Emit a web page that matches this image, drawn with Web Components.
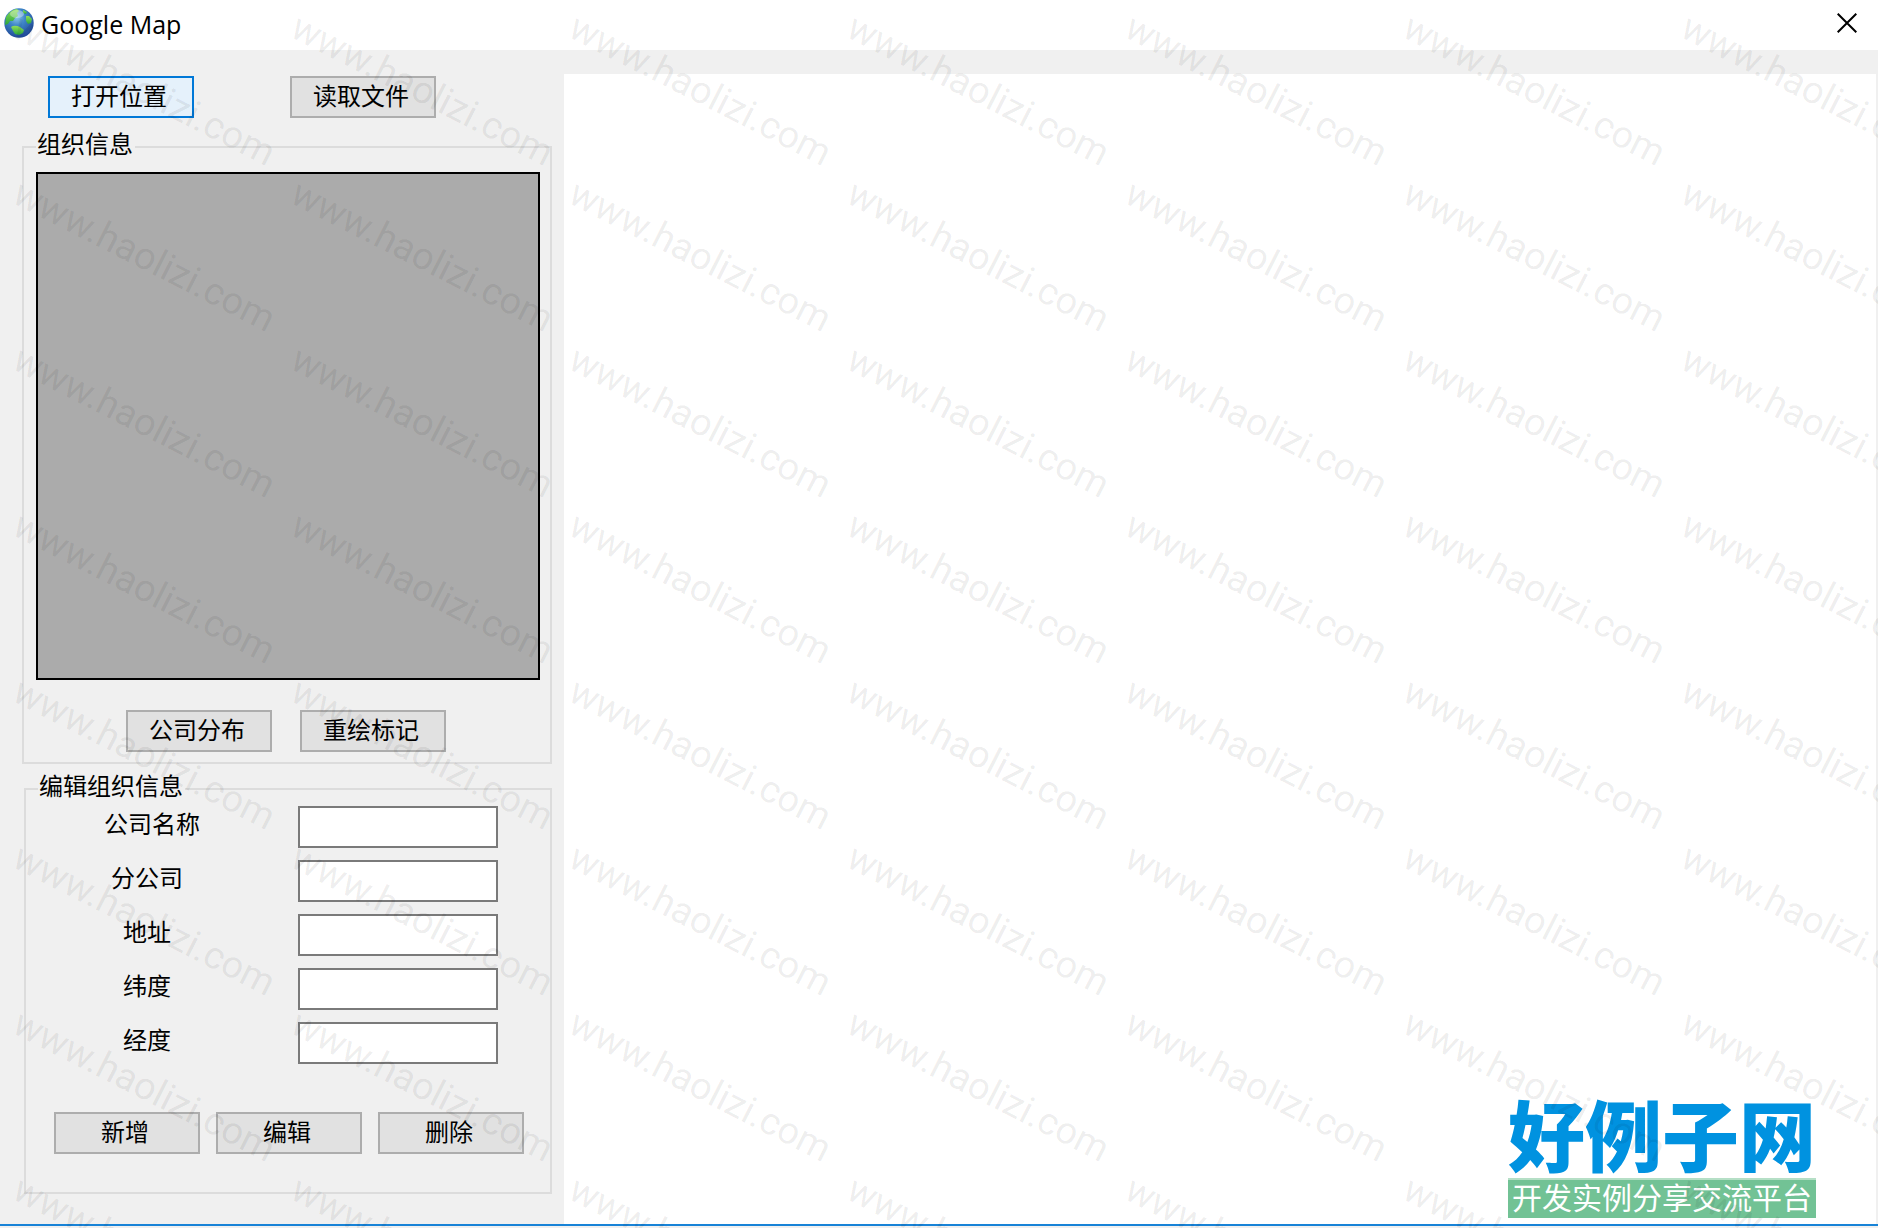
<!DOCTYPE html>
<html lang="zh-CN">
<head>
<meta charset="utf-8">
<title>Google Map</title>
<style>
  html, body { margin: 0; }
  body {
    font: 24px/26px "Liberation Sans", "Noto Sans CJK SC", sans-serif;
    color: #000;
    background: #f0f0f0;
  }
</style>
</head>
<body>
<app-window></app-window>

<script>
const define = (name, html, setup) => {
  const template = document.createElement('template');
  template.innerHTML = html;
  customElements.define(name, class extends HTMLElement {
    constructor() {
      super();
      this.attachShadow({ mode: 'open' }).append(template.content.cloneNode(true));
    }
    connectedCallback() {
      if (setup) setup(this, this.shadowRoot);
    }
  });
};

define('globe-icon', `
  <style>:host { display: block; width: 30px; height: 30px; } svg { display: block; }</style>
  <svg width="30" height="30" viewBox="0 0 30 30" aria-hidden="true">
    <defs>
      <radialGradient id="sea" cx=".42" cy=".3" r=".72">
        <stop offset="0" stop-color="#8fc8ea"/>
        <stop offset=".4" stop-color="#3f86c8"/>
        <stop offset="1" stop-color="#1f4796"/>
      </radialGradient>
      <linearGradient id="land" x2="0" y2="1">
        <stop offset="0" stop-color="#8fdc5a"/>
        <stop offset="1" stop-color="#2aa83a"/>
      </linearGradient>
      <clipPath id="disc"><circle cx="15" cy="15" r="14.5"/></clipPath>
    </defs>
    <circle cx="15" cy="15" r="14.7" fill="url(#sea)"/>
    <g clip-path="url(#disc)" fill="url(#land)">
      <path d="M2 9 C5 4 9 1 13 1 L15 3 L13 5 L14 8 L11 10 L9 13 L6 13 L4 16 L1 17 Z"/>
      <path d="M22 8 L25 8 L28 11 L27 15 L24 16 L22 13 Z"/>
      <path d="M7 19 C10 17 13 18 16 19 L20 22 L19 25 L15 27 L11 26 L9 23 Z"/>
      <path d="M19 2 L23 4 L22 6 L19 5 Z"/>
    </g>
    <ellipse cx="13" cy="6" rx="7" ry="4" fill="#fff" opacity=".35"/>
  </svg>`);

define('title-bar', `
  <style>
    :host { display: flex; align-items: center; height: 50px; background: #fff; padding-left: 4px; }
    h1 { flex: 1; margin: 0 0 2px 7px; font: 400 25px/30px "Open Sans", sans-serif; }
    globe-icon { margin-bottom: 4px; }
    button { width: 62px; height: 46px; align-self: flex-start; border: 0; padding: 0; background: none; display: grid; place-items: center; }
  </style>
  <globe-icon></globe-icon>
  <h1><slot></slot></h1>
  <button type="button" aria-label="关闭">
    <svg width="20" height="20" viewBox="0 0 20 20" fill="none" stroke="#000" stroke-width="2"><path d="M.7 .7 19.3 19.3M19.3 .7 .7 19.3"/></svg>
  </button>`);

define('push-button', `
  <style>
    :host { display: block; }
    button {
      display: block; box-sizing: border-box; width: 146px; height: 42px;
      border: 2px solid #adadad; padding: 0 4px 0 0; background: #e1e1e1;
      color: inherit; font: inherit; white-space: nowrap;
    }
    :host([primary]) button { border-color: #0078d7; background: #e5f1fb; }
  </style>
  <button type="button"><slot></slot></button>`);

define('group-box', `
  <style>
    :host { display: block; }
    fieldset { min-width: 0; margin: 0; border: 2px solid #dcdcdc; padding: 0 10px 0 12px; }
    legend { padding: 1px 2px 5px 1px; line-height: 26px; }
  </style>
  <fieldset><legend></legend><slot></slot></fieldset>`,
  (host, root) => { root.querySelector('legend').textContent = host.getAttribute('caption'); });

define('data-grid', `
  <style>
    :host { display: block; box-sizing: border-box; height: 508px; border: 2px solid #000; background: #ababab; }
  </style>`);

define('text-field', `
  <style>
    :host { display: flex; }
    label { width: 218px; padding-top: 6px; box-sizing: border-box; text-align: center; margin-right: 42px; }
    :host([wide]) label { padding-left: 10px; }
    input {
      box-sizing: border-box; width: 200px; height: 42px; border: 2px solid #7a7a7a;
      border-radius: 0; padding: 0 4px; background: #fff; font: inherit; outline: 0;
    }
  </style>
  <label for="value"></label><input id="value" type="text">`,
  (host, root) => { root.querySelector('label').textContent = host.getAttribute('label'); });

define('site-logo', `
  <style>
    :host { display: block; width: 308px; text-align: center; white-space: nowrap; font-family: "Noto Sans CJK SC", sans-serif; }
    .name { font-size: 77px; line-height: 78px; font-weight: 900; color: #0092e0; padding-bottom: 6px; }
    .tagline { box-sizing: border-box; height: 40px; border-top: 2px solid #b5dfc6; background: #72c295; color: #fff; font-size: 30px; line-height: 32px; }
  </style>
  <div class="name">好例子网</div>
  <div class="tagline">开发实例分享交流平台</div>`);

define('map-view', `
  <style>
    :host { display: flex; justify-content: flex-end; align-items: flex-end; background: #fff; padding: 0 60px 6px 0; }
  </style>
  <site-logo></site-logo>`);

define('water-mark', `
  <style>
    :host {
      position: absolute; inset: 0; overflow: hidden; pointer-events: none;
      display: grid; grid-auto-rows: 166px;
      color: rgba(0, 0, 0, .075); font: 38px/40px Roboto, sans-serif;
    }
    span { display: block; width: max-content; transform-origin: 0 100%; transform: rotate(27deg); margin: 2px 0 0 7px; height: 40px; }
  </style>`,
  (host, root) => {
    const columns = Math.ceil(innerWidth / 278);
    const rows = Math.ceil(innerHeight / 166);
    host.style.gridTemplateColumns = 'repeat(' + columns + ', 278px)';
    for (let i = 0; i < columns * rows; i++) {
      const mark = document.createElement('span');
      mark.textContent = 'www.haolizi.com';
      root.append(mark);
    }
  });

define('side-panel', `
  <style>
    :host { display: flex; flex-direction: column; box-sizing: border-box; width: 564px; padding: 26px 12px 30px 22px; }
    .row { display: flex; }
    .files { gap: 96px; padding-left: 26px; margin-bottom: 13px; }
    .organisations { margin-bottom: 9px; }
    data-grid { margin-top: 9px; }
    .marks { gap: 28px; padding: 30px 0 10px 90px; }
    .editor { margin-left: 2px; }
    .fields { display: flex; flex-direction: column; gap: 12px; padding-top: 1px; }
    .actions { gap: 16px; padding: 48px 0 38px 16px; }
  </style>
  <div class="row files">
    <push-button primary>打开位置</push-button>
    <push-button>读取文件</push-button>
  </div>
  <group-box class="organisations" caption="组织信息">
    <data-grid></data-grid>
    <div class="row marks">
      <push-button>公司分布</push-button>
      <push-button>重绘标记</push-button>
    </div>
  </group-box>
  <group-box class="editor" caption="编辑组织信息">
    <div class="fields">
      <text-field wide label="公司名称"></text-field>
      <text-field label="分公司"></text-field>
      <text-field label="地址"></text-field>
      <text-field label="纬度"></text-field>
      <text-field label="经度"></text-field>
    </div>
    <div class="row actions">
      <push-button>新增</push-button>
      <push-button>编辑</push-button>
      <push-button>删除</push-button>
    </div>
  </group-box>`);

define('app-window', `
  <style>
    :host { position: relative; display: flex; flex-direction: column; box-sizing: border-box; min-height: 100vh; padding-bottom: 2px; }
    main { flex: 1; display: flex; border-bottom: 2px solid #1883d7; }
    map-view { flex: 1; margin: 24px 2px 0 0; }
  </style>
  <title-bar>Google Map</title-bar>
  <main>
    <side-panel></side-panel>
    <map-view></map-view>
  </main>
  <water-mark></water-mark>`);
</script>
</body>
</html>
